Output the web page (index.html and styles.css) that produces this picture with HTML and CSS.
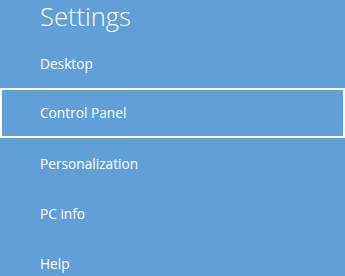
FILE: index.html
```html
<!DOCTYPE html>
<html lang="en">
<head>
<meta charset="utf-8">
<title>Settings</title>
<link rel="stylesheet" href="styles.css">
</head>
<body>
<div class="pane">
  <h1 class="title">Settings</h1>
  <ul class="menu">
    <li class="item">Desktop</li>
    <li class="item item--selected">Control Panel</li>
    <li class="item">Personalization</li>
    <li class="item">PC info</li>
    <li class="item">Help</li>
  </ul>
</div>
</body>
</html>
```
FILE: styles.css
```css
html, body {
  margin: 0;
  padding: 0;
  height: 100%;
}
body {
  background: #609fd8;
  color: #ffffff;
  font-family: "Open Sans", "Noto Sans", sans-serif;
  overflow: hidden;
}
.pane {
  display: flex;
  flex-direction: column;
}
.title {
  margin: 0;
  height: 38px;
  box-sizing: border-box;
  padding-left: 40px;
  font-size: 25.5px;
  font-weight: 300;
  line-height: 32px;
  letter-spacing: 0;
}
.menu {
  list-style: none;
  margin: 0;
  padding: 0;
}
.item {
  height: 50px;
  box-sizing: border-box;
  display: flex;
  align-items: center;
  padding-left: 40px;
  font-size: 13.7px;
  line-height: 20px;
  padding-top: 1px;
}
.item--selected {
  border: 2px solid #ffffff;
  padding-left: 38px;
  padding-top: 0;
}
```
